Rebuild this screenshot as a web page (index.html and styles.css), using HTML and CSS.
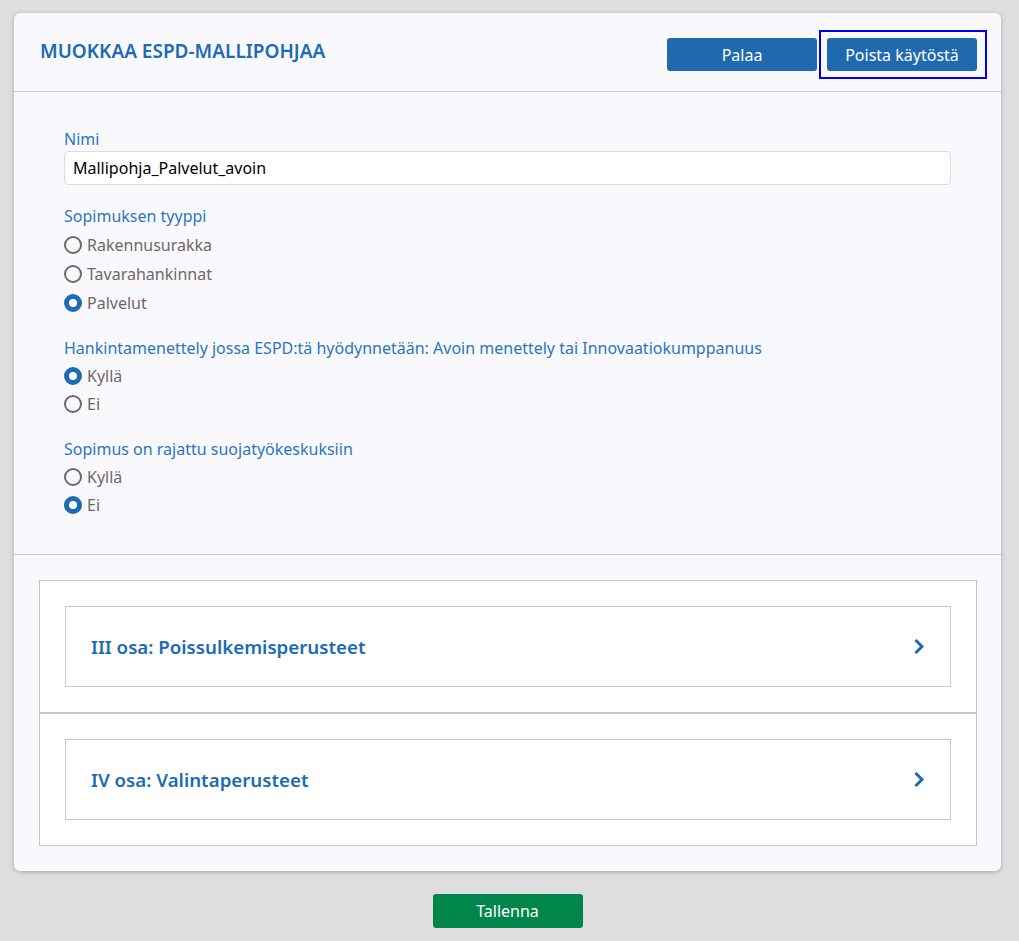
FILE: index.html
```html
<!DOCTYPE html>
<html lang="fi">
<head>
    <meta charset="UTF-8">
    <meta name="viewport" content="width=device-width, initial-scale=1.0">
    <title>Muokkaa ESPD-mallipohjaa</title>
    <link rel="stylesheet" href="styles.css">
</head>
<body>
    <div class="page">
        <div class="card">
            <div class="card-header">
                <h1 class="title">MUOKKAA ESPD-MALLIPOHJAA</h1>
                <div class="actions">
                    <button class="btn btn-blue">Palaa</button>
                    <span class="focus-ring"><button class="btn btn-blue">Poista käytöstä</button></span>
                </div>
            </div>

            <div class="form">
                <div class="field">
                    <label class="field-label" for="name">Nimi</label>
                    <input class="text-input" id="name" type="text" value="Mallipohja_Palvelut_avoin">
                </div>

                <div class="field">
                    <div class="field-label">Sopimuksen tyyppi</div>
                    <div class="radio tall"><span class="dot"></span>Rakennusurakka</div>
                    <div class="radio tall"><span class="dot"></span>Tavarahankinnat</div>
                    <div class="radio tall"><span class="dot checked"></span>Palvelut</div>
                </div>

                <div class="field">
                    <div class="field-label">Hankintamenettely jossa ESPD:tä hyödynnetään: Avoin menettely tai Innovaatiokumppanuus</div>
                    <div class="radio"><span class="dot checked"></span>Kyllä</div>
                    <div class="radio"><span class="dot"></span>Ei</div>
                </div>

                <div class="field">
                    <div class="field-label">Sopimus on rajattu suojatyökeskuksiin</div>
                    <div class="radio"><span class="dot"></span>Kyllä</div>
                    <div class="radio"><span class="dot checked"></span>Ei</div>
                </div>
            </div>

            <div class="parts">
                <div class="parts-box">
                    <div class="part">
                        <div class="part-link">
                            <span class="part-title">III osa: Poissulkemisperusteet</span>
                            <svg class="chevron" width="12" height="17" viewBox="0 0 12 17"><path d="M2.5 2 L9 8.5 L2.5 15" fill="none" stroke="#1d6bb3" stroke-width="3"/></svg>
                        </div>
                    </div>
                    <div class="part">
                        <div class="part-link">
                            <span class="part-title">IV osa: Valintaperusteet</span>
                            <svg class="chevron" width="12" height="17" viewBox="0 0 12 17"><path d="M2.5 2 L9 8.5 L2.5 15" fill="none" stroke="#1d6bb3" stroke-width="3"/></svg>
                        </div>
                    </div>
                </div>
            </div>
        </div>

        <div class="footer">
            <button class="btn btn-green">Tallenna</button>
        </div>
    </div>
</body>
</html>
```

FILE: styles.css
```css
body { margin: 0; background-color: #dedede; font-family: "Noto Sans", "Open Sans", sans-serif; font-size: 16px; }
.page { margin: 13px 18px 0 14px; }
.card { background-color: #f9f9fd; border-radius: 6px; box-shadow: 0 1px 4px rgba(0, 0, 0, 0.25); }

.card-header { display: flex; justify-content: space-between; align-items: flex-start; padding: 25px 22px 20px 26px; border-bottom: 1px solid #c9c9cf; }
.title { margin: 0; font-size: 19px; line-height: 26px; font-weight: 600; color: #1d6bb3; }
.actions { display: flex; gap: 10px; }

.btn { width: 150px; height: 33px; border: none; border-radius: 3px; color: white; font-family: inherit; font-size: 16px; cursor: pointer; }
.btn-blue { background-color: #1f6aae; }
.btn-green { background-color: #00864b; height: 34px; }
.focus-ring { display: flex; padding-right: 2px; outline: 2px solid #0000ee; outline-offset: 6px; }

.form { padding: 36px 50px 35px 50px; border-bottom: 1px solid #c9c9cf; }
.field + .field { margin-top: 20px; }
.field-label { display: block; color: #2a76bf; line-height: 22px; margin-bottom: 3px; }
.field:first-child .field-label { margin-bottom: 1px; }
.text-input { display: block; box-sizing: border-box; width: 100%; height: 34px; padding: 0 8px; border: 1px solid #dcdcdc; border-radius: 4px; background: white; font-family: inherit; font-size: 16px; color: #000; }

.radio { display: flex; align-items: center; height: 28px; color: #6e6864; }
.radio.tall { height: 29px; }
.dot { box-sizing: border-box; width: 18px; height: 18px; margin-right: 5px; border: 2px solid #6e6a67; border-radius: 50%; }
.dot.checked { border: 5.5px solid #1d6bb3; background-color: white; }

.parts { padding: 25px 24px 25px 25px; }
.parts-box { background-color: white; border: 1px solid #c8c8c8; }
.part { padding: 25px; }
.part + .part { border-top: 2px solid #c8c8c8; }
.part-link { display: flex; justify-content: space-between; align-items: center; height: 79px; padding: 0 25px 0 25px; border: 1px solid #c8c8c8; cursor: pointer; }
.part-title { font-size: 18.7px; font-weight: 600; color: #1d6bb3; }

.footer { display: flex; justify-content: center; padding-top: 23px; }
```
